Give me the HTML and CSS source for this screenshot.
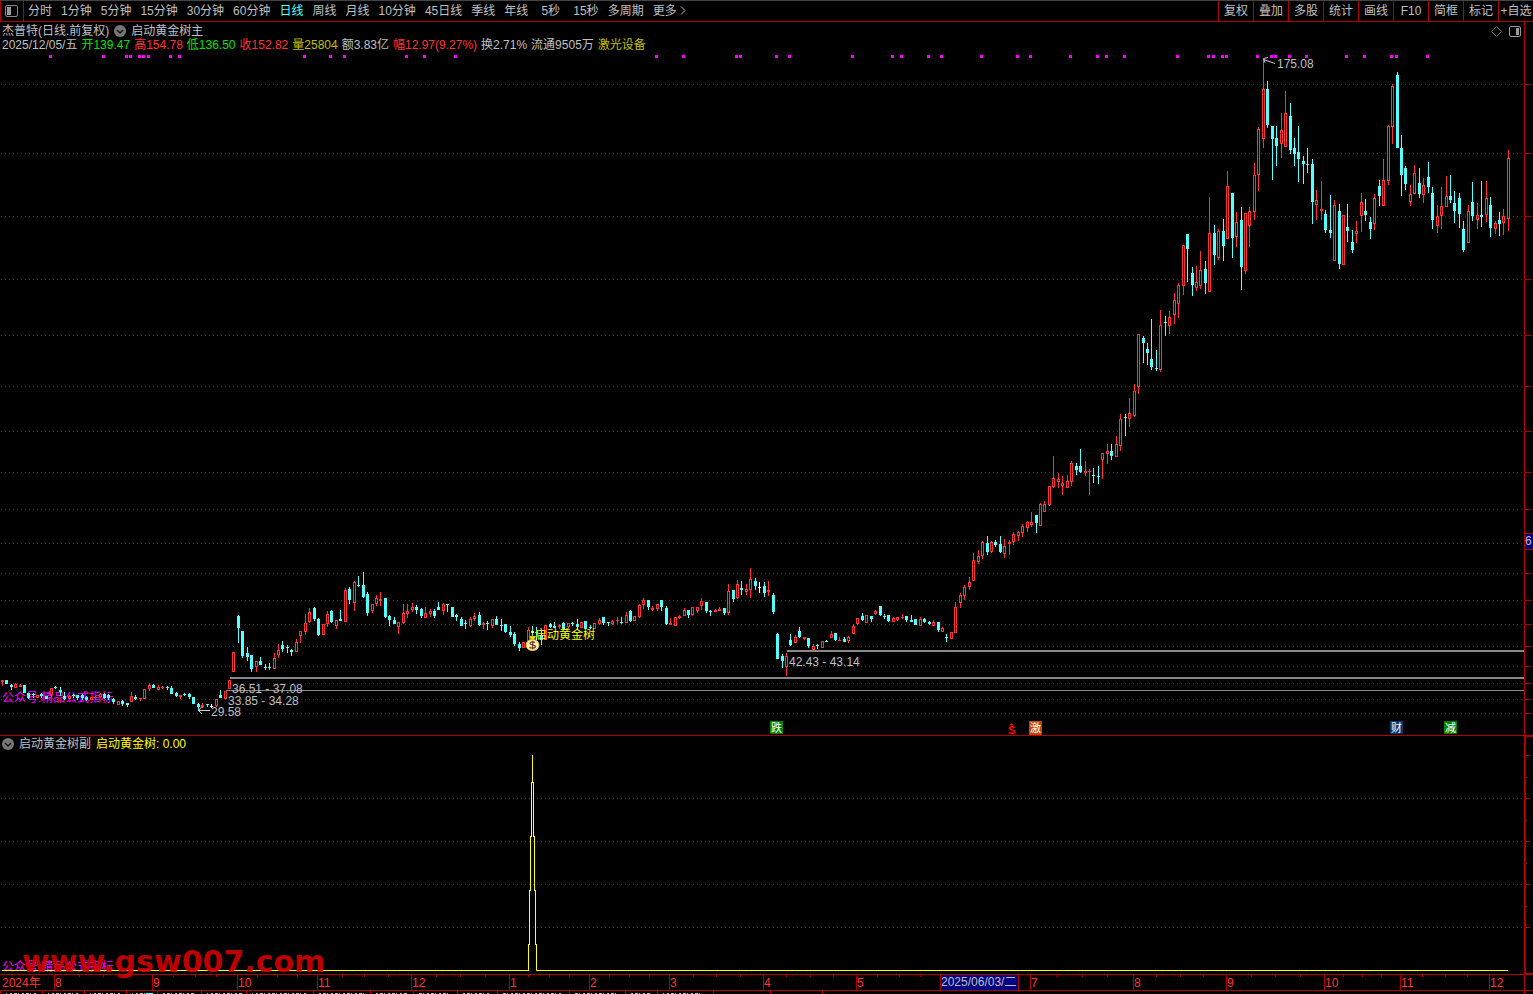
FILE: index.html
```html
<!DOCTYPE html>
<html lang="zh-CN">

<head>
    <meta charset="utf-8">
    <title>杰普特 日线</title>
    <link rel="stylesheet" href="styles.css">
</head>

<body>
    <header class="toolbar">
        <button class="side" aria-label="侧栏">
            <svg width="13" height="12" viewBox="0 0 13 12">
                <rect x="0.5" y="0.5" width="12" height="11" rx="1.5" fill="none" stroke="#888" />
                <rect x="2" y="2" width="4" height="8" fill="#999" />
            </svg>
        </button>
        <nav class="periods">
            <button>分时</button>
            <button>1分钟</button>
            <button>5分钟</button>
            <button>15分钟</button>
            <button>30分钟</button>
            <button>60分钟</button>
            <button class="active">日线</button>
            <button>周线</button>
            <button>月线</button>
            <button>10分钟</button>
            <button>45日线</button>
            <button>季线</button>
            <button>年线</button>
            <button class="sec">5秒</button>
            <button>15秒</button>
            <button>多周期</button>
            <button class="more">更多<svg width="6" height="9" viewBox="0 0 6 9"><path d="M1 0.5L5 4.5L1 8.5" fill="none" stroke="#c0c0c0" /></svg></button>
        </nav>
        <nav class="tools">
            <button>复权</button>
            <button>叠加</button>
            <button>多股</button>
            <button>统计</button>
            <button>画线</button>
            <button>F10</button>
            <button>简框</button>
            <button>标记</button>
            <button>+自选</button>
        </nav>
    </header>

    <main class="panel">
        <svg id="main_chart" viewBox="0 22 1533 714" preserveAspectRatio="none">
            <g id="grid"></g>
            <text class="mark" x="2" y="702">公众号:精品公式指标</text>
            <g id="candles"></g>
            <g id="dots" fill="#ff00ff"></g>

            <!-- gaps -->
            <g fill="#888">
                <rect x="787" y="650" width="737" height="2" />
                <rect x="230" y="677" width="1294" height="2" />
                <rect x="226" y="690" width="1298" height="1" />
            </g>
            <g class="label">
                <text x="789" y="666">42.43 - 43.14</text>
                <text x="232" y="693">36.51 - 37.08</text>
                <text x="228" y="705">33.85 - 34.28</text>
                <text x="211" y="716">29.58</text>
                <text x="1277" y="68">175.08</text>
            </g>
            <g fill="none" stroke="#d0d0d0">
                <path d="M198.500 710.500H210M202 706.500L198.500 710.500L202 714" />
                <path d="M1275 63.500L1263.500 59.500M1268 57.500L1263.500 58.500L1265 62.500" />
            </g>

            <!-- signal -->
            <rect x="531" y="631" width="3" height="2" fill="#ffff00" />
            <path d="M529 636H536L534.500 639H530.500Z" fill="#ffe800" stroke="#806000" stroke-width="0.5" />
            <ellipse cx="532.500" cy="645" rx="6.500" ry="5.500" fill="#fff0b0" stroke="#e0d020" />
            <path d="M535 642.500C533.500 641.500 530 641.500 530 643.500C530 645.500 535.500 644.500 535.500 646.500C535.500 648.500 531 648.500 529.500 647.300M532.700 640.800V649.200" fill="none" stroke="#703030" stroke-width="1.200" />
            <text class="signal" x="535" y="639">启动黄金树</text>

            <!-- events -->
            <g class="event">
                <rect x="770" y="721" width="13" height="13" fill="#008000" />
                <text x="771" y="732">跌</text>
                <rect x="1029" y="721" width="13" height="14" fill="#c04808" />
                <text x="1030" y="732">激</text>
                <rect x="1390" y="721" width="13" height="13" fill="#003870" />
                <text x="1391" y="732">财</text>
                <rect x="1444" y="721" width="13" height="13" fill="#008000" />
                <text x="1445" y="732">减</text>
            </g>
            <path d="M1009 725.500L1011.500 723L1014 725.500Z" fill="#f00" />
            <text class="split" x="1008" y="734">S</text>

            <g id="axis" fill="#b00000"></g>
            <rect x="1525" y="533" width="8" height="17" fill="#000080" />
            <path d="M1525 533.500H1533M1525 549.500H1533" stroke="#b00000" />
            <text class="label" x="1525" y="545">6</text>
        </svg>
        <div class="info">
            <div class="line">
                <span>杰普特(日线.前复权)</span>
                <button class="drop" aria-label="主图指标">
                    <svg width="12" height="12" viewBox="0 0 12 12"><circle cx="6" cy="6" r="6" fill="#777" /><path d="M3 5L6 8L9 5" fill="none" stroke="#111" stroke-width="1.500" /></svg>
                </button>
                <span>启动黄金树主</span>
            </div>
            <div class="line quote">
                <span>2025/12/05/五</span>
                <span class="green">开139.47</span>
                <span class="red">高154.78</span>
                <span class="green">低136.50</span>
                <span class="red">收152.82</span>
                <span class="gold">量25804</span>
                <span>额3.83亿</span>
                <span class="red">幅12.97(9.27%)</span>
                <span>换2.71%</span>
                <span>流通9505万</span>
                <span class="gold">激光设备</span>
            </div>
        </div>
        <div class="corner">
            <svg width="11" height="11" viewBox="0 0 11 11"><path d="M5.500 0.500L10.500 5.500L5.500 10.500L0.500 5.500Z" fill="none" stroke="#777" /></svg>
            <svg width="12" height="11" viewBox="0 0 12 11">
                <rect x="0.5" y="0.5" width="11" height="10" rx="1.5" fill="none" stroke="#999" />
                <rect x="7" y="2" width="3" height="7" fill="#999" />
            </svg>
        </div>
    </main>

    <section class="panel">
        <svg id="sub_chart" viewBox="0 736 1533 238" preserveAspectRatio="none">
            <g id="sub_grid"></g>
            <g id="sub_axis" fill="#b00000"></g>
            <text class="mark" x="2" y="971">公众号:精品公式指标</text>
            <path d="M2 970.500H528.500V944H529.500V890H530.500V836H531.500V782H532.500V755V782H533.500V836H534.500V890H535.500V944H536.500V970.500H1508" fill="none" stroke="#ffff00" shape-rendering="crispEdges" />
        </svg>
        <div class="info sub">
            <div class="line">
                <button class="drop" aria-label="副图指标">
                    <svg width="12" height="12" viewBox="0 0 12 12"><circle cx="6" cy="6" r="6" fill="#777" /><path d="M3 5L6 8L9 5" fill="none" stroke="#111" stroke-width="1.500" /></svg>
                </button>
                <span>启动黄金树副</span>
                <span class="yellow">启动黄金树: 0.00</span>
            </div>
        </div>
        <div class="watermark">www.gsw007.com</div>
    </section>

    <footer class="panel">
        <svg id="time_axis" viewBox="0 974 1533 20" preserveAspectRatio="none"></svg>
    </footer>

    <script src="chart.js"></script>
</body>

</html>
```
FILE: styles.css
```css
* {
    box-sizing: border-box;
}

body {
    margin: 0;
    height: 100vh;
    overflow: hidden;
    display: grid;
    grid-template-rows: 22px 714fr 238fr 20px;
    background: #000;
    color: #c0c0c0;
    font: 12px/14px "Liberation Sans", "Noto Sans CJK SC", sans-serif;
}

button {
    padding: 0;
    border: none;
    background: none;
    color: inherit;
    font: inherit;
    white-space: nowrap;
}

/* toolbar */
.toolbar {
    display: flex;
    min-width: 0;
    border-top: 1px solid #444;
    border-bottom: 1px solid #b00000;
}

.toolbar .side {
    width: 24px;
    padding: 3px 0 0 4px;
    text-align: left;
    border: 1px solid #b00000;
    border-width: 0 1px;
}

.periods {
    display: flex;
    flex: 1;
    gap: 9px;
    padding-left: 4px;
}

.periods .active {
    color: #54ffff;
}

.periods .sec {
    min-width: 27px;
}

.periods .more svg {
    margin-left: 3px;
}

.tools {
    display: flex;
}

.tools button {
    width: 35px;
    border-left: 1px solid #b00000;
}

/* panels */
.panel {
    position: relative;
    min-height: 0;
}

.panel > svg {
    display: block;
    width: 100%;
    height: 100%;
}

.info {
    position: absolute;
    top: 2px;
    left: 2px;
}

.line {
    display: flex;
    align-items: center;
    gap: 5px;
    height: 14px;
    white-space: nowrap;
}

.line.quote {
    gap: 4px;
}

.info.sub {
    top: 1px;
}

.drop {
    width: 12px;
    height: 12px;
}

.drop svg {
    display: block;
}

.corner {
    position: absolute;
    top: 4px;
    right: 12px;
    display: flex;
    gap: 7px;
}

.green {
    color: #00e600;
}

.red {
    color: #ff3232;
}

.gold {
    color: #c0c000;
}

.yellow {
    color: #ffff00;
}

.watermark {
    position: absolute;
    left: 22px;
    bottom: -6px;
    z-index: 1;
    color: #d00000;
    opacity: 0.9;
    font: bold 30px/36px "DejaVu Sans", sans-serif;
}

/* svg text */
.label {
    fill: #c0c0c0;
}

.mark {
    fill: #ff00ff;
}

.signal {
    fill: #ffff00;
}

.event text {
    fill: #fff;
    font-size: 11px;
}

.split {
    fill: #ff0000;
    font-size: 11px;
    font-weight: bold;
}

.month {
    fill: #ff3232;
}
```
FILE: chart.js
```js
var NS = "http://www.w3.org/2000/svg";
var RED = "#ff3232";
var CYAN = "#54ffff";
var AXIS = "#b00000";

// each block: origin, then bars "color x high top bottom low" in 1/3 px
var blocks = [
    {
        x: 0, y: 560, bars: "r 7 360 360 366 377,g 19 360 360 372 372,g 34 372 375 381 390,r 46 370 372 384 384,r 61 372 375 381 381,g 73 375 375 399 399," +
            "g 85 399 399 414 418,g 100 400 402 405 415,r 112 405 405 414 414,g 124 400 402 408 414,g 139 408 408 417 417,r 154 384 384 405 411," +
            "g 166 378 381 384 387,g 181 381 390 397 408,g 193 396 408 417 420,r 208 405 408 417 417,g 220 402 405 408 414,g 232 404 405 414 420," +
            "g 247 402 405 414 420,g 259 408 411 420 424,r 274 411 411 420 420,r 286 408 411 414 417,r 301 399 402 411 414,g 313 399 402 414 417," +
            "g 325 402 405 414 420,g 340 414 417 426 432,r 355 423 423 435 435,g 367 420 423 432 438,g 382 429 429 435 441,r 394 396 408 426 426," +
            "g 406 405 411 417 420,r 421 414 415 417 423,r 433 387 387 417 417,r 448 369 375 387 393,g 460 372 375 384 384,r 475 375 381 390 390," +
            "r 487 378 381 384 387,g 502 378 381 384 390,g 514 378 384 402 402,g 529 396 399 408 411,r 541 404 405 411 417,g 553 399 402 405 408," +
            "g 568 399 402 411 417,g 580 411 411 432 432,g 595 429 432 441 453,r 607 430 434 440 444,g 622 432 432 436 441,w 634 432 437 440 444," +
            "r 649 417 417 438 441,g 661 390 405 414 414,r 676 393 393 417 417,r 688 360 360 388 388,r 700 276 276 336 336,g 715 165 168 204 249," +
            "g 727 213 213 288 294,g 742 261 279 291 303,g 754 285 285 327 336,r 769 303 303 321 336,g 781 291 303 315 315,g 796 312 320 323 330," +
            "g 808 309 320 323 330,r 823 279 294 327 327,r 835 252 270 285 294,g 847 243 255 267 276,g 862 255 261 264 279,g 874 267 269 276 288," +
            "r 889 237 246 276 276,r 901 213 213 228 249,r 916 162 189 216 225,r 928 144 156 186 189,g 943 141 144 177 183,g 955 174 177 225 228," +
            "r 970 192 192 225 225,r 982 153 162 192 201,g 994 150 153 186 189,r 1009 180 180 198 207,g 1021 150 177 183 183,r 1036 84 90 186 186," +
            "g 1048 81 87 120 132,r 1063 63 66 129 153,g 1075 48 75 78 81,g 1090 36 75 111 114,g 1102 96 102 159 168,r 1117 132 132 153 159," +
            "r 1129 105 114 132 138,r 1141 96 117 122 138,g 1156 114 114 171 174,g 1168 165 168 180 198,g 1183 171 180 192 192,r 1195 186 186 201 222"
    },
    {
        x: 400, y: 560, bars: "r 10 132 159 189 192,r 22 132 153 162 174,r 37 129 141 150 156,g 49 135 141 150 162,g 64 144 147 168 174,r 76 141 159 174 174," +
            "r 91 147 153 162 171,g 103 147 153 168 174,g 115 126 141 150 150,r 130 129 132 153 165,g 142 132 132 135 156,g 157 141 141 171 171," +
            "g 169 162 165 171 183,g 184 171 177 198 198,g 196 180 188 191 207,r 211 171 177 198 201,r 223 159 168 177 183,g 238 156 165 195 198," +
            "r 250 186 190 195 207,g 262 183 189 192 210,r 277 177 177 198 204,g 289 168 177 195 195,g 304 177 195 198 213,g 316 192 192 216 219," +
            "g 331 198 216 225 231,g 343 216 222 252 258,g 358 246 252 264 273,r 370 246 246 264 264,r 385 201 210 246 249,g 397 198 216 220 240," +
            "g 409 201 216 219 240,g 424 210 225 240 255,r 436 195 195 240 240,g 451 189 192 201 204,g 463 186 198 204 204,r 478 192 196 201 207," +
            "g 490 186 189 207 210,r 505 189 189 201 207,g 517 186 189 192 198,g 532 177 192 201 207,r 544 186 186 204 204,g 556 183 183 207 207," +
            "g 571 195 200 203 207,r 583 189 189 207 207,r 598 174 180 192 195,g 610 171 171 189 195,g 625 186 186 189 198,r 637 180 183 192 195," +
            "r 652 171 181 184 192,g 664 171 186 189 192,r 679 156 165 189 189,g 691 150 153 183 186,r 703 168 168 183 183,r 718 132 135 171 174," +
            "r 730 114 120 135 147,g 745 120 120 141 150,r 757 138 144 150 153,r 772 132 132 147 153,g 784 120 120 141 153,g 799 138 144 192 195," +
            "r 811 174 189 195 195,r 826 171 171 198 198,r 838 165 168 174 177,r 853 144 150 168 168,g 865 150 150 165 174,r 877 141 141 165 168," +
            "r 892 141 141 153 159,r 904 114 123 138 150,g 919 126 126 153 159,g 931 150 153 156 168,r 946 147 150 156 156,r 958 141 148 153 153," +
            "g 973 144 144 159 165,r 985 72 93 159 165,g 1000 90 90 117 126,r 1012 60 72 114 117,g 1024 63 84 90 105,r 1039 72 87 96 105," +
            "r 1051 24 57 90 114,g 1066 54 63 78 90,w 1078 66 81 84 99,g 1093 66 78 99 111,r 1105 63 90 96 108,g 1120 99 105 156 162," +
            "g 1132 219 222 297 297,g 1147 282 288 303 324,r 1159 279 288 321 348,g 1171 222 240 255 258,r 1186 225 231 249 249"
    },
    {
        x: 780, y: 560, bars: "g 58 201 213 231 234,r 73 231 232 237 240,g 85 234 234 258 264,r 100 252 258 270 270,g 112 252 254 257 267,r 127 243 243 264 264," +
            "g 139 240 243 246 246,r 154 213 222 234 234,g 166 219 219 240 243,r 178 231 240 243 243,g 193 231 237 246 246,r 205 228 231 243 249," +
            "r 220 192 198 222 222,r 232 174 174 192 195,g 247 159 168 180 183,r 259 165 165 189 189,g 274 168 168 177 186,r 286 150 153 162 165," +
            "g 301 138 138 165 168,g 313 162 168 171 177,g 325 165 165 183 186,r 340 171 174 186 186,r 352 171 171 180 183,r 367 162 171 174 177," +
            "g 379 168 168 180 186,g 394 165 180 186 186,g 406 177 177 195 195,r 421 171 177 198 198,g 433 174 177 186 189,g 448 183 186 192 195," +
            "r 460 180 186 198 198,g 475 186 186 210 216,r 487 201 204 216 216,g 499 222 231 234 246,r 514 216 216 237 237,r 526 126 141 219 219," +
            "r 541 99 105 129 144,r 553 75 81 108 120,r 568 51 66 81 90,r 580 -21 0 63 63"
    },
    {
        x: 940, y: 300, bars: "r 115 750 768 786 792,r 127 723 726 768 777,g 142 708 729 756 765,r 154 723 726 756 759,g 166 720 726 735 741,g 181 708 732 756 759," +
            "r 193 717 738 762 774,r 208 720 726 732 765,r 220 696 702 726 735,r 235 693 696 708 723,r 247 672 678 699 711,r 262 663 666 684 696," +
            "r 274 636 666 675 681,g 289 645 645 669 699,r 301 609 612 678 678,r 313 603 612 636 636,r 328 558 558 615 618,r 340 468 534 561 564," +
            "r 355 519 537 546 564,r 367 528 549 558 585,r 382 525 543 564 564,r 394 483 489 546 558,g 409 489 498 510 525,g 421 447 498 516 519," +
            "r 436 483 513 519 528,r 448 507 513 516 585,g 460 504 525 528 549,g 475 498 528 531 552,r 487 459 459 480 537,r 502 432 453 462 492," +
            "g 514 432 453 468 480,r 529 408 432 471 471,r 541 342 357 438 453,g 556 342 351 354 408,r 568 294 339 357 381,r 583 252 273 348 351," +
            "r 595 102 102 261 282,g 610 108 114 129 189,g 622 129 147 159 195,g 634 57 177 201 210,g 649 150 204 207 213,r 661 30 75 210 216," +
            "g 676 48 66 69 108,r 688 33 51 78 102"
    },
    {
        x: 1140, y: 190, bars: "r 103 309 330 375 402,r 115 279 285 342 384,r 130 165 165 288 315,g 142 132 132 177 276"
    },
    {
        x: 1180, y: 0, bars: "g 37 801 819 855 888,r 49 798 846 864 873,r 61 753 810 858 867,g 76 783 807 849 882,r 88 591 699 876 876,g 103 675 699 765 795," +
            "r 115 687 693 774 780,g 130 657 693 738 783,r 142 513 558 717 717,g 157 579 579 714 774,r 169 636 666 711 741,g 184 621 660 801 870," +
            "r 196 639 639 813 822,r 208 621 633 678 741,r 223 489 525 636 660,r 235 381 387 525 573,r 250 180 267 417 444,g 262 243 267 375 384," +
            "g 277 378 378 417 540,g 289 378 414 438 498,r 304 339 390 432 474,r 316 273 339 441 441,g 331 309 348 450 462,g 343 414 444 462 498," +
            "g 355 378 456 477 546,g 370 468 483 492 552,g 382 444 491 495 519,g 397 477 492 606 672,r 409 570 600 615 660,r 424 543 627 633 660," +
            "g 436 630 642 690 699,g 451 585 690 699 714,r 463 600 615 783 783,g 478 612 633 792 807,r 490 645 645 795 795,g 502 612 681 693 726," +
            "g 517 690 726 750 759,r 529 663 693 702 729,r 544 579 606 648 696,g 556 597 633 645 663,g 571 651 666 687 717,r 583 582 594 672 690," +
            "g 598 540 558 588 618,r 610 477 540 618 618,r 625 375 378 543 555,r 637 252 258 381 432,g 652 216 225 444 444,g 664 405 444 525 588," +
            "g 676 498 504 552 570,r 691 555 582 606 618,r 703 495 519 582 582,g 718 504 549 582 594,r 730 534 555 585 609,g 745 486 531 561 579," +
            "g 757 561 579 660 687,r 772 615 648 678 699,r 784 561 618 648 687,r 799 528 588 621 621,g 811 525 588 600 609,g 823 573 609 633 669," +
            "g 838 579 594 642 684,g 850 663 687 750 756,r 865 615 633 729 729,g 877 546 606 648 663,r 892 609 645 660 687,g 904 543 645 651 681," +
            "r 919 543 594 645 666,g 931 591 615 684 711,r 946 663 669 687 702,g 958 636 660 672 708,r 970 627 648 669 705,r 985 450 474 657 693"
    }
];

var gridRows = [84, 153, 216, 279, 335, 386, 431, 472, 509, 543, 573, 600, 624, 646, 666, 683, 699, 713];
var subRows = [798, 841, 884, 927];

var dots = [50, 103, 126, 130, 139, 143, 148, 170, 179, 304, 330, 344, 406, 424, 455, 656, 683, 736, 740, 776, 789, 852,
    892, 901, 928, 941, 981, 1017, 1030, 1070, 1097, 1106, 1124, 1177, 1208, 1213, 1222, 1226, 1257, 1271, 1275, 1289,
    1306, 1346, 1364, 1391, 1396, 1427];

var months = [[54, "8"], [152, "9"], [237, "10"], [317, "11"], [411, "12"], [509, "1"], [589, "2"], [669, "3"], [763, "4"],
    [856, "5"], [940, ""], [1030, "7"], [1133, "8"], [1226, "9"], [1324, "10"], [1400, "11"], [1489, "12"]];

var ticks = [79, 103, 129, 173, 195, 216, 257, 277, 297, 342, 364, 388, 436, 460, 485, 528, 549, 569, 609, 629, 649, 693,
    716, 740, 786, 810, 833, 877, 899, 920, 1056, 1082, 1107, 1156, 1180, 1203, 1251, 1275, 1300, 1343, 1362, 1381, 1422,
    1445, 1467];

// tabs of the row under the time axis
var tabs = [0, 42, 84, 126, 157, 201, 246, 313, 370, 413, 457, 497, 569, 625, 657, 713, 770, 822];

function byId(id) {
    return document.getElementById(id);
}

function rect(parent, x, y, w, h, fill) {
    var el = document.createElementNS(NS, "rect");
    el.setAttribute("x", x);
    el.setAttribute("y", y);
    el.setAttribute("width", w);
    el.setAttribute("height", h);
    if (fill) el.setAttribute("fill", fill);
    parent.appendChild(el);
}

function text(parent, x, y, str, cls) {
    var el = document.createElementNS(NS, "text");
    el.setAttribute("x", x);
    el.setAttribute("y", y);
    el.setAttribute("class", cls);
    el.textContent = str;
    parent.appendChild(el);
}

function dotted(parent, y) {
    var el = document.createElementNS(NS, "path");
    el.setAttribute("d", "M1 " + (y + 0.5) + "H1523");
    el.setAttribute("stroke", AXIS);
    el.setAttribute("stroke-dasharray", "1 3");
    parent.appendChild(el);
}

function drawBar(parent, block, bar) {
    var p = bar.split(" ");
    var x = block.x + Math.floor(p[1] / 3);
    var high = block.y + Math.round(p[2] / 3);
    var top = block.y + Math.round(p[3] / 3);
    var bottom = block.y + Math.round(p[4] / 3);
    var low = block.y + Math.round(p[5] / 3);
    var color = p[0] == "r" ? RED : p[0] == "g" ? CYAN : "#fff";

    rect(parent, x, high, 1, low - high, color);
    rect(parent, x - 1, top, 3, Math.max(bottom - top, 1), color);
    if (p[0] == "r" && bottom - top > 2) {
        rect(parent, x, top + 1, 1, bottom - top - 2, "#000");
    }
}

function drawMain() {
    gridRows.forEach(function (y) {
        dotted(byId("grid"), y);
        rect(byId("axis"), 1524, y, 7, 1);
    });
    rect(byId("axis"), 1524, 22, 1, 714);
    rect(byId("axis"), 0, 735, 1533, 1);
    blocks.forEach(function (block) {
        block.bars.split(",").forEach(function (bar) {
            drawBar(byId("candles"), block, bar);
        });
    });
    dots.forEach(function (x) {
        rect(byId("dots"), x - 1, 55, 3, 3);
    });
}

function drawSub() {
    var axis = byId("sub_axis");
    subRows.forEach(function (y) {
        dotted(byId("sub_grid"), y);
        rect(axis, 1524, y, 6, 1);
        rect(axis, 1524, y - 21, 3, 1);
    });
    rect(axis, 1524, 755, 6, 1);
    rect(axis, 1524, 906, 3, 1);
    rect(axis, 1524, 736, 2, 238);
    rect(axis, 1524, 736, 9, 1);
    rect(axis, 1524, 973, 9, 1);
}

function drawTime() {
    var svg = byId("time_axis");
    rect(svg, 0, 974, 1533, 1, AXIS);
    rect(svg, 0, 990, 1533, 1, AXIS);
    rect(svg, 1524, 974, 1, 20, AXIS);
    ticks.forEach(function (x) {
        rect(svg, x, 975, 1, 2, AXIS);
    });
    months.forEach(function (m) {
        rect(svg, m[0], 974, 1, 16, AXIS);
        text(svg, m[0] + 1, 987, m[1], "month");
    });
    text(svg, 2, 987, "2024年", "month");

    rect(svg, 941, 975, 77, 15, "#000080");
    rect(svg, 1018, 974, 1, 16, AXIS);
    text(svg, 941, 986, "2025/06/03/二", "label");

    // only the upper edge of the tabs is visible
    tabs.forEach(function (x, i) {
        rect(svg, x, 991, 1, 3, AXIS);
        if (i == tabs.length - 1) return;
        var end = Math.min(tabs[i + 1] - 6, 702);
        for (var t = x + 6; t < end; t += 4) {
            rect(svg, t, 993, t % 3 + 1, 1, "#c0c0c0");
        }
    });
    rect(svg, 146, 993, 7, 1, CYAN);
}

drawMain();
drawSub();
drawTime();
```
